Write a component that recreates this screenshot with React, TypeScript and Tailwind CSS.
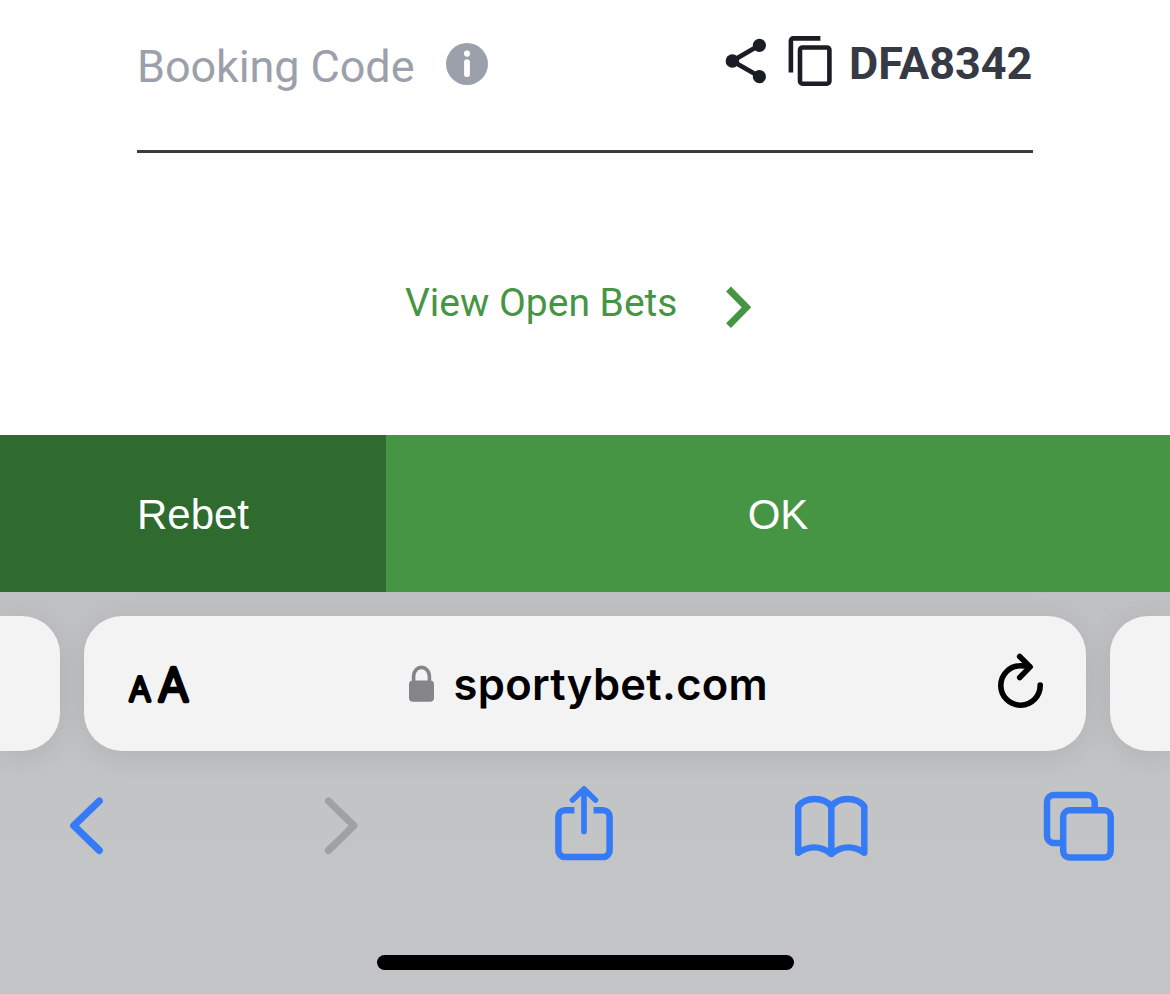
import type { ReactNode } from "react";

function Icon({ w, h, className, children }: { w: number; h: number; className?: string; children: ReactNode }) {
  return (
    <svg width={w} height={h} viewBox={`0 0 ${w} ${h}`} fill="none" className={`block shrink-0 ${className ?? ""}`} aria-hidden="true">
      {children}
    </svg>
  );
}

function BookingRow() {
  return (
    <div className="flex h-[150px] items-start justify-between">
      <div className="flex items-start pt-[42px]">
        <span className="mt-[2px] w-[309px] whitespace-nowrap text-[45px] leading-[45px] tracking-[-0.1px] text-[#9ca0ab]">Booking Code</span>
        <Icon w={43} h={43}>
          <circle cx="21" cy="22" r="21" fill="#9ca0ab" />
          <circle cx="21" cy="11.6" r="3.1" fill="#fff" />
          <path d="M21 20.2v12" stroke="#fff" strokeWidth="5.8" strokeLinecap="round" />
        </Icon>
      </div>
      <div className="flex items-start pt-[36px] text-[#1b1d24]">
        <Icon w={42} h={50} className="mr-[21px]">
          <path d="M34.4 9.3 7.4 25l27 15.5" stroke="currentColor" strokeWidth="4.8" />
          <circle cx="34.4" cy="9.3" r="6.6" fill="currentColor" />
          <circle cx="7.4" cy="25" r="6.8" fill="currentColor" />
          <circle cx="34.4" cy="40.7" r="6.6" fill="currentColor" />
        </Icon>
        <Icon w={44} h={50} className="mr-[17px]">
          <path d="M32.4 2.4H5.2a2.3 2.3 0 0 0-2.3 2.3v31.8" stroke="currentColor" strokeWidth="4.6" />
          <rect x="12" y="11.5" width="29.4" height="36.2" rx="2.5" stroke="currentColor" strokeWidth="4.6" />
        </Icon>
        <span className="mt-[5px] whitespace-nowrap pr-[0.6px] text-[45px] font-bold leading-[45px] text-[#353a45]">DFA8342</span>
      </div>
    </div>
  );
}

function AddressBar() {
  return (
    <div className="flex h-[135px] justify-between">
      <div className="w-[60px] rounded-r-[38px] bg-[#f3f3f4] shadow-[0_6px_30px_rgba(0,0,0,0.09)]" />
      <div className="flex w-[1002px] items-center rounded-[38px] bg-[#f3f3f4] pl-[34px] pr-[42px] shadow-[0_6px_30px_rgba(0,0,0,0.09)]">
        <svg width="84" height="80" viewBox="-10 -18 84 80" className="block shrink-0" fill="#000" stroke="#000" strokeLinejoin="round" strokeLinecap="round" fontFamily="Inter, sans-serif" fontWeight="200" aria-hidden="true">
          <text x="1.3" y="38.8" fontSize="32.5" strokeWidth="3.9">A</text>
          <text x="30.6" y="38.8" fontSize="45.5" strokeWidth="4.7">A</text>
        </svg>
        <div className="flex flex-1 items-center pl-[206px]">
          <Icon w={27} h={38}>
            <path d="M5.6 17V11a7.9 8.6 0 0 1 15.8 0v6" stroke="#858489" strokeWidth="3.6" />
            <rect x="1" y="15.6" width="25" height="21.2" rx="4" fill="#858489" />
          </Icon>
          <span className="ml-[18.5px] whitespace-nowrap font-['Inter',sans-serif] text-[43.5px] font-semibold leading-[52px] tracking-[0.3px] text-black">sportybet.com</span>
        </div>
        <Icon w={48} h={62}>
          <path d="M44.2 32A19.7 19.7 0 1 1 24.500 12.800c3 0 6 .3 9 .9" stroke="#000" strokeWidth="5.600" strokeLinecap="round" />
          <path d="M23.700 3.500 34.100 13.900 23.700 24.500" stroke="#000" strokeWidth="5.600" strokeLinecap="round" strokeLinejoin="round" />
        </Icon>
      </div>
      <div className="w-[60px] rounded-l-[38px] bg-[#f3f3f4] shadow-[0_6px_30px_rgba(0,0,0,0.09)]" />
    </div>
  );
}

function Toolbar() {
  return (
    <div className="flex h-[211px] items-start pt-[35px] text-[#367bf6]">
      <Icon w={35} h={76} className="ml-[69px]">
        <path d="M30.3 15 4.8 39.7 30.3 64.4" stroke="currentColor" strokeWidth="7.2" strokeLinecap="round" strokeLinejoin="round" />
      </Icon>
      <Icon w={35} h={76} className="ml-[220px] text-[#a0a1a3]">
        <path d="M4.5 15 29.9 39.7 4.5 64.4" stroke="currentColor" strokeWidth="7.2" strokeLinecap="round" strokeLinejoin="round" />
      </Icon>
      <Icon w={60} h={76} className="ml-[195px]">
        <path d="M20.4 24.2H11a6.6 6.6 0 0 0-6.6 6.6v33.7a6.6 6.6 0 0 0 6.6 6.600h38a6.600 6.600 0 0 0 6.600-6.600V30.800a6.600 6.600 0 0 0-6.600-6.600h-9.400" stroke="currentColor" strokeWidth="6.500" />
        <path d="M30 4v41.500M18.600 14 30 3l11.400 11" stroke="currentColor" strokeWidth="5.700" strokeLinecap="round" strokeLinejoin="round" />
      </Icon>
      <Icon w={74} h={76} className="ml-[180px]">
        <path d="M37.300 20.500C30 10.500 11.500 10.500 4.200 20.500V66.700C13.500 60.500 25.500 58.500 37.300 68 49.100 58.500 61.100 60.500 70.300 66.700V20.500C63 10.500 44.600 10.500 37.300 20.500V68" stroke="currentColor" strokeWidth="6.500" strokeLinecap="round" strokeLinejoin="round" />
      </Icon>
      <Icon w={72} h={76} className="ml-[175px]">
        <path d="M51.700 22V16a7 7 0 0 0-7-7H11a7 7 0 0 0-7 7v34a7 7 0 0 0 7 7h7" stroke="currentColor" strokeWidth="6.500" />
        <rect x="20.200" y="24.300" width="47.500" height="47.300" rx="6.500" stroke="currentColor" strokeWidth="6.500" />
      </Icon>
    </div>
  );
}

export default function App() {
  return (
    <div className="flex h-[994px] w-[1170px] flex-col overflow-hidden bg-white font-['Roboto',sans-serif]">
      <main className="flex h-[435px] flex-col px-[137px]">
        <BookingRow />
        <div className="h-[3px] shrink-0 bg-[#3a3b43]" />
        <a className="flex items-start pl-[268px] pt-[130px] text-[#469545]">
          <span className="w-[321px] whitespace-nowrap text-[39px] leading-[40px]">View Open Bets</span>
          <Icon w={26} h={44} className="mt-[2px]">
            <path d="M2.500 4 20.500 22.300 2.500 40.600" stroke="currentColor" strokeWidth="6.800" />
          </Icon>
        </a>
      </main>
      <div className="flex h-[157px] font-['Liberation_Sans',Arial,sans-serif] text-[42px] text-white">
        <button className="w-[386px] bg-[#2f6a2f] pt-[1px]">Rebet</button>
        <button className="flex-1 bg-[#469545] pt-[1px]">OK</button>
      </div>
      <footer className="h-[402px] bg-linear-to-b from-[#bfc0c2] via-[#c3c4c5] to-[#c4c5c7] pt-[24px]">
        <AddressBar />
        <Toolbar />
        <div className="flex justify-center">
          <div className="-mt-[7px] h-[15px] w-[417px] rounded-full bg-black" />
        </div>
      </footer>
    </div>
  );
}
